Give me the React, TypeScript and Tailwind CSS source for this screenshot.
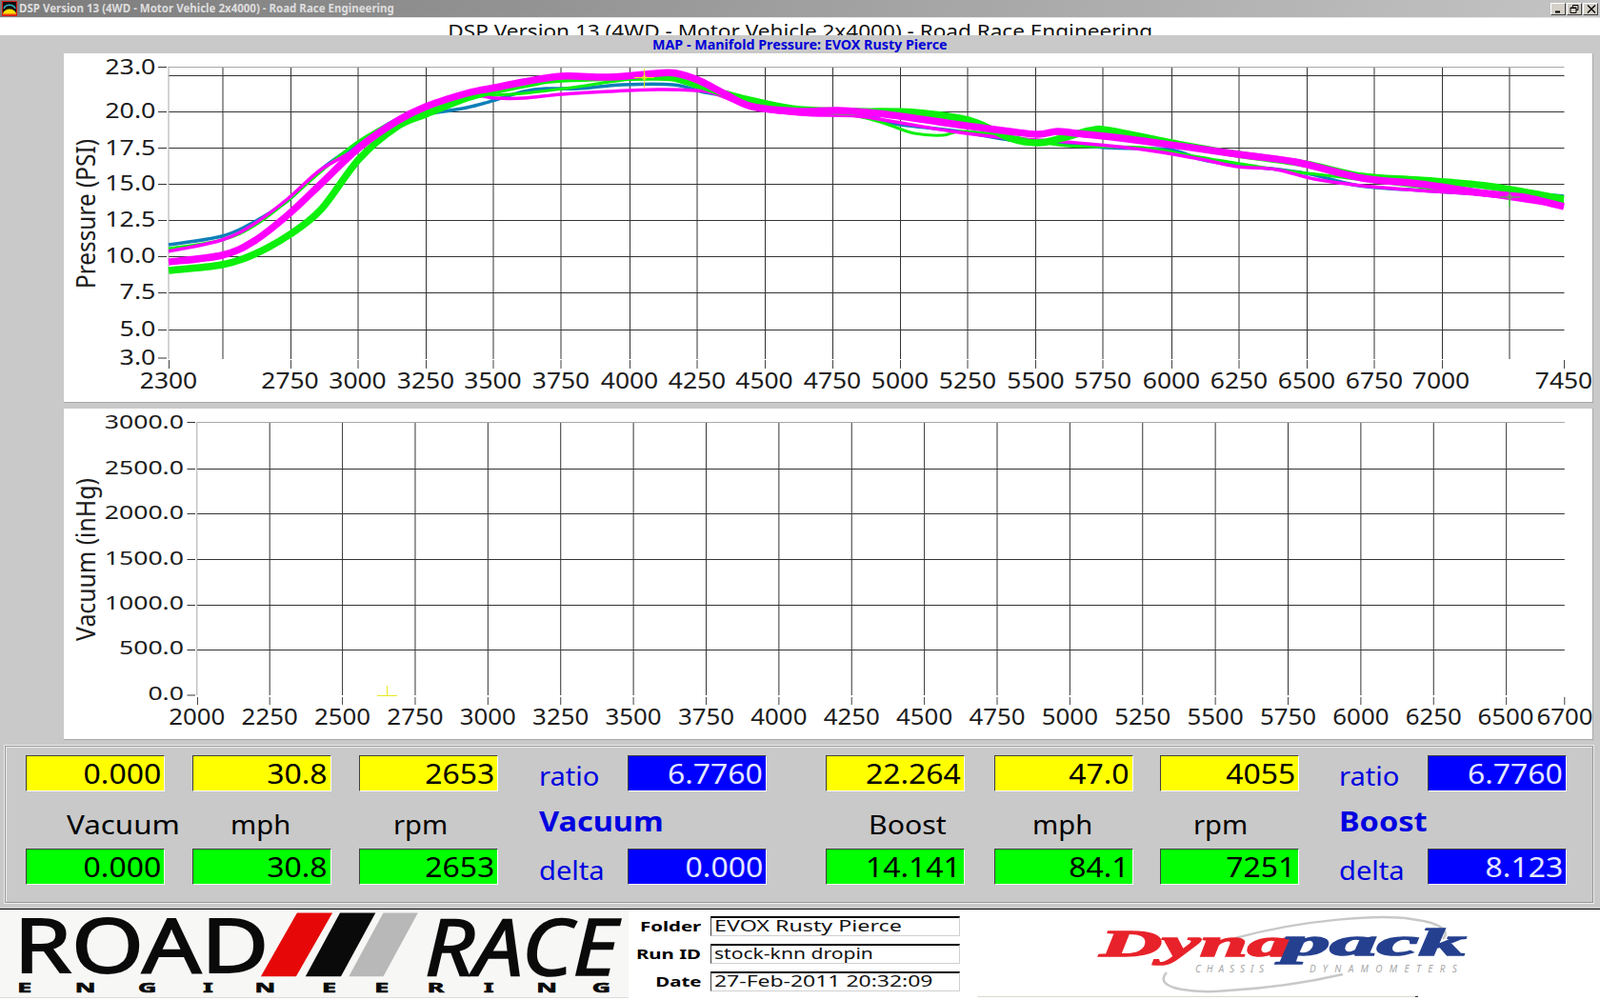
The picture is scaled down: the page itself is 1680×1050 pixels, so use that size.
import type { ReactNode } from 'react';

type Pt = [number, number];

// catmull-rom through the traced points, coordinates are page pixels
const smooth = (pts: Pt[]) => {
  let d = `M${pts[0][0]} ${pts[0][1]}`;
  for (let i = 0; i < pts.length - 1; i++) {
    const p0 = pts[Math.max(i - 1, 0)];
    const p1 = pts[i];
    const p2 = pts[i + 1];
    const p3 = pts[Math.min(i + 2, pts.length - 1)];
    d += ` C${p1[0] + (p2[0] - p0[0]) / 6} ${p1[1] + (p2[1] - p0[1]) / 6} ${p2[0] - (p3[0] - p1[0]) / 6} ${p2[1] - (p3[1] - p1[1]) / 6} ${p2[0]} ${p2[1]}`;
  }
  return d;
};

const blueRun: Pt[] = [[177, 257], [233, 248], [267, 233], [303, 210], [337, 178], [377, 150], [417, 125], [447, 120], [490, 113], [520, 105], [550, 96], [573, 93], [607, 93], [653, 89], [707, 89], [740, 97], [773, 102], [807, 109], [840, 114], [873, 120], [907, 120], [940, 130], [1007, 138], [1060, 147], [1093, 148], [1160, 155], [1227, 157], [1260, 167], [1293, 173], [1343, 178], [1377, 183], [1427, 195], [1493, 200], [1560, 204], [1600, 203], [1642, 206]];
const thinGreen: Pt[] = [[177, 261], [233, 252], [267, 237], [303, 210], [337, 180], [377, 148], [417, 126], [447, 117], [490, 103], [520, 100], [550, 98], [607, 91], [640, 86], [673, 82], [700, 82], [727, 90], [753, 98], [790, 108], [840, 114], [900, 122], [930, 130], [960, 140], [990, 142], [1010, 138], [1060, 143], [1120, 153], [1200, 155], [1260, 165], [1340, 178], [1400, 185], [1560, 205], [1642, 212]];
const thinPink: Pt[] = [[177, 264], [233, 252], [267, 235], [303, 208], [337, 178], [377, 155], [417, 125], [447, 113], [490, 100], [520, 103], [550, 103], [590, 99], [640, 96], [690, 94], [730, 95], [750, 98], [790, 113], [840, 120], [900, 122], [940, 128], [1000, 138], [1060, 145], [1120, 149], [1200, 157], [1260, 167], [1300, 175], [1340, 178], [1380, 188], [1430, 195], [1490, 200], [1560, 205], [1642, 217]];
const thickGreen: Pt[] = [[177, 284], [233, 278], [267, 267], [303, 247], [337, 220], [377, 167], [417, 133], [447, 120], [490, 103], [520, 95], [560, 87], [590, 83], [690, 81], [720, 85], [760, 98], [800, 108], [840, 115], [900, 117], [960, 118], [1020, 127], [1060, 145], [1090, 150], [1115, 145], [1145, 137], [1165, 137], [1240, 152], [1300, 162], [1370, 172], [1430, 185], [1490, 189], [1560, 195], [1642, 209]];
const thickPink: Pt[] = [[177, 275], [233, 268], [267, 253], [303, 225], [337, 193], [377, 155], [417, 127], [447, 112], [490, 98], [520, 92], [550, 86], [590, 80], [640, 81], [690, 77], [710, 77], [735, 85], [760, 98], [790, 112], [840, 117], [880, 116], [930, 120], [1000, 130], [1060, 138], [1090, 141], [1110, 138], [1130, 140], [1200, 148], [1300, 162], [1360, 170], [1430, 187], [1490, 193], [1560, 203], [1600, 207], [1642, 217]];

const upperGridX = [234, 305.5, 376, 447.5, 518, 589, 661.5, 732, 803.5, 874.5, 945.5, 1016, 1087.5, 1158, 1230.5, 1301, 1372.5, 1443, 1514.5, 1585];
const upperGridY = [79.5, 117.5, 155.5, 193.5, 231.5, 269.5, 307.5, 346.5];
const upperTicksY = [70.5, 117.5, 155.5, 193.5, 231.5, 269.5, 307.5, 346.5, 376];
const upperYLabels: [string, number][] = [['23.0', 70.5], ['20.0', 116.5], ['17.5', 155], ['15.0', 192.5], ['12.5', 230], ['10.0', 268], ['7.5', 306], ['5.0', 345], ['3.0', 375]];
const upperXLabels: [string, number][] = [['2300', 177], ['2750', 304.5], ['3000', 375.5], ['3250', 447], ['3500', 517.5], ['3750', 589], ['4000', 661], ['4250', 732], ['4500', 802.5], ['4750', 874], ['5000', 945], ['5250', 1016], ['5500', 1087.5], ['5750', 1158], ['6000', 1230], ['6250', 1301], ['6500', 1372], ['6750', 1443], ['7000', 1513], ['7450', 1642]];

const lowerGridX = Array.from({ length: 18 }, (_, i) => 283.2 + i * 76.38);
const lowerGridY = [492.5, 539.5, 587.5, 635.5, 682.5];
const lowerTicksY = [443.5, 492.5, 539.5, 587.5, 635.5, 682.5, 730];
const lowerYLabels: [string, number][] = [['3000.0', 443], ['2500.0', 491], ['2000.0', 538], ['1500.0', 585.5], ['1000.0', 633], ['500.0', 680], ['0.0', 728]];
const lowerXLabels: [string, number][] = [...Array.from({ length: 18 }, (_, i): [string, number] => [String(2000 + i * 250), 206.8 + i * 76.38]), ['6500', 1581], ['6700', 1643]];

const Tick = ({ x, y, size, sx, anchor, children }: { x: number; y: number; size: number; sx: number; anchor: 'start' | 'middle' | 'end'; children: ReactNode }) => (
  <text transform={`translate(${x} ${y}) scale(${sx} 1)`} textAnchor={anchor} dy=".36em" fontSize={size} fill="#1c1c1c">
    {children}
  </text>
);

const UpperChart = () => (
  <svg viewBox="67 56 1605 366" className="block w-full h-full">
    {upperGridY.map((y) => <line key={y} x1={177} x2={1642.5} y1={y} y2={y} stroke="#333" strokeWidth={1} />)}
    {upperGridX.map((x) => <line key={x} x1={x} x2={x} y1={70} y2={377} stroke="#333" strokeWidth={1} />)}
    {upperGridX.map((x) => <line key={x} x1={x} x2={x} y1={378} y2={387} stroke={x === 234 || x === 1585 ? 'none' : '#444'} strokeWidth={1} />)}
    {[177.5, 1642.5].map((x) => <line key={x} x1={x} x2={x} y1={378} y2={387} stroke="#444" strokeWidth={1} />)}
    <line x1={177} x2={1642.5} y1={70.5} y2={70.5} stroke="#a8a8a8" strokeWidth={1} />
    <line x1={177} x2={177} y1={70} y2={377} stroke="#a8a8a8" strokeWidth={1} />
    {upperTicksY.map((y) => <line key={y} x1={166} x2={175} y1={y} y2={y} stroke="#333" strokeWidth={1} />)}

    <g fill="none" strokeLinejoin="round" strokeLinecap="butt">
      <path d={smooth(blueRun)} stroke="#0f7fb8" strokeWidth={3.5} />
      <path d={smooth(thinGreen)} stroke="#0cf00c" strokeWidth={3} />
      <path d={smooth(thinPink)} stroke="#ff00ff" strokeWidth={3.5} />
      <path d={smooth(thickGreen)} stroke="#0cf00c" strokeWidth={7.5} />
      <path d={smooth(thickPink)} stroke="#ff00ff" strokeWidth={7.5} />
    </g>

    {/* cursors */}
    <g fill="none" stroke="#e8e820" strokeWidth={1}>
      <path d="M676.5 72V92M666 81.5H687" />
      <circle cx={676.5} cy={81.5} r={2} />
    </g>
    <path d="M1585 197V217M1575 207H1596" fill="none" stroke="#22e022" strokeWidth={1} />
    <rect x={1583} y={205} width={4} height={4} fill="none" stroke="#888" strokeWidth={1} />

    {upperYLabels.map(([t, y]) => <Tick key={t} x={163.5} y={y} size={21.5} sx={1.25} anchor="end">{t}</Tick>)}
    {upperXLabels.map(([t, x]) => <Tick key={t} x={x} y={400} size={23.3} sx={1.135} anchor="middle">{t}</Tick>)}
    <text transform="translate(100 224.5) rotate(-90) scale(.87 1)" textAnchor="middle" fontSize={28} fill="#1c1c1c">
      Pressure (PSI)
    </text>
  </svg>
);

const LowerChart = () => (
  <svg viewBox="67 429 1605 347" className="block w-full h-full">
    {lowerGridY.map((y) => <line key={y} x1={206.8} x2={1642.8} y1={y} y2={y} stroke="#333" strokeWidth={1} />)}
    {lowerGridX.map((x) => <line key={x} x1={x} x2={x} y1={443} y2={730} stroke="#333" strokeWidth={1} />)}
    {lowerGridX.map((x) => <line key={x} x1={x} x2={x} y1={732} y2={740} stroke="#444" strokeWidth={1} />)}
    <line x1={207.5} x2={207.5} y1={732} y2={740} stroke="#444" strokeWidth={1} />
    <line x1={1642.8} x2={1642.8} y1={732} y2={740} stroke="#444" strokeWidth={1} />
    <line x1={206.8} x2={1642.8} y1={443.5} y2={443.5} stroke="#a8a8a8" strokeWidth={1} />
    <line x1={206.8} x2={206.8} y1={443} y2={730} stroke="#a8a8a8" strokeWidth={1} />
    {lowerTicksY.map((y) => <line key={y} x1={196.5} x2={205} y1={y} y2={y} stroke="#333" strokeWidth={1} />)}
    <path d="M406.5 720V730M396 730.5H417" fill="none" stroke="#e8e820" strokeWidth={1} />

    {lowerYLabels.map(([t, y]) => <Tick key={t} x={193} y={y} size={20.5} sx={1.3} anchor="end">{t}</Tick>)}
    {lowerXLabels.map(([t, x]) => <Tick key={t} x={x} y={753} size={23.3} sx={1.11} anchor="middle">{t}</Tick>)}
    <text transform="translate(100 587.5) rotate(-90) scale(.92 1)" textAnchor="middle" fontSize={27} fill="#1c1c1c">
      Vacuum (inHg)
    </text>
  </svg>
);

const Readout = ({ value, tone }: { value: string; tone: 'yellow' | 'green' | 'blue' }) => {
  const toneClass = tone === 'yellow' ? 'bg-[#ffff00] text-black' : tone === 'green' ? 'bg-[#00ff00] text-black' : 'bg-[#0000ff] text-[#e4e8ff]';
  return (
    <div className={`w-[146px] h-[38px] flex items-center justify-end pr-[3px] pb-[2px] border border-t-[#404040] border-l-[#404040] border-b-white border-r-white text-[29px] leading-none ${toneClass}`}>
      <span className="inline-block origin-right scale-x-[1.1]">{value}</span>
    </div>
  );
};

const Caption = ({ text, className, scale }: { text: string; className: string; scale: string }) => (
  <div className={`whitespace-nowrap text-[28px] leading-none ${className}`}>
    <span className={`inline-block origin-left ${scale}`}>{text}</span>
  </div>
);

type GroupProps = {
  gridClass: string;
  top: string[];
  bottom: string[];
  ratio: string;
  delta: string;
  title: string;
  labels: [string, string, string][];
};

const ReadoutGroup = ({ gridClass, top, bottom, ratio, delta, title, labels }: GroupProps) => (
  <div className={`grid grid-rows-[38px_60px_38px] ${gridClass}`}>
    {top.map((v) => <Readout key={v} value={v} tone="yellow" />)}
    <Caption text="ratio" scale="scale-x-[1.04]" className="self-center pt-[4px] text-[#0000e0]" />
    <Readout value={ratio} tone="blue" />

    {labels.map(([t, ml, scale]) => <Caption key={t} text={t} scale={scale} className={`self-center pt-[8px] text-black ${ml}`} />)}
    <div className="self-center pt-[2px] whitespace-nowrap text-[28px] leading-none font-bold text-[#0000e0]">
      <span className="inline-block origin-left scale-x-[1.16]">{title}</span>
    </div>
    <div />

    {bottom.map((v) => <Readout key={v} value={v} tone="green" />)}
    <Caption text="delta" scale="scale-x-[1.04]" className="self-center pt-[6px] text-[#0000e0]" />
    <Readout value={delta} tone="blue" />
  </div>
);

const Field = ({ label, value, scale }: { label: string; value: string; scale: string }) => (
  <div className="flex h-[21px] items-center">
    <div className="w-[86px] pr-[10px] text-right text-[15px] font-bold leading-none text-black">
      <span className="inline-block origin-right scale-x-[1.36]">{label}</span>
    </div>
    <div className="w-[262px] h-[21px] flex items-center pl-[3px] bg-white border border-t-2 border-t-black border-l-[#404040] border-b-[#d0d0d0] border-r-[#d0d0d0] text-[15.5px] leading-none text-[#111]">
      <span className={`inline-block origin-left whitespace-nowrap ${scale}`}>{value}</span>
    </div>
  </div>
);

const RoadRaceLogo = () => (
  <svg viewBox="0 955 660 93" className="block w-full h-full">
    <text transform="translate(11 1021.5) scale(1.23 1)" fontSize={80} fill="#0a0a0a" stroke="#0a0a0a" strokeWidth={1.8}>ROAD</text>
    <path d="M311.7 958.5H349.3L310.7 1026H273.3Z" fill="#e60808" />
    <path d="M357.3 958.5H395L358.3 1026H320.7Z" fill="#0a0a0a" />
    <path d="M403.3 958.5H440L403.3 1026H366.7Z" fill="#b8b8b8" />
    <text transform="translate(447 1025) scale(1.1 1)" fontSize={84} fontStyle="italic" fill="#0a0a0a" stroke="#0a0a0a" strokeWidth={1.6}>RACE</text>
    <text transform="translate(0 1043) scale(1.8 1)" x="8.3 42.2 79.4 117.8 148.3 187.8 218.9 250 283.3 314.4 347.2" fontSize={15} fontWeight={700} fill="#0a0a0a" stroke="#0a0a0a" strokeWidth={0.7}>ENGINEERING</text>
  </svg>
);

const DynapackLogo = () => (
  <svg viewBox="1008 955 672 95" className="block w-full h-full">
    <path d="M1297 985C1370 965 1450 960 1482 965C1520 970 1521 980 1515 986" fill="none" stroke="#c8c8c8" strokeWidth={2.5} />
    <path d="M1225 1021C1208 1040 1260 1043 1290 1040C1340 1037 1380 1030 1410 1023" fill="none" stroke="#c8c8c8" strokeWidth={2.5} />
    <g fontFamily="'Liberation Serif', serif" fontStyle="italic" fontWeight={700} fontSize={40}>
      <text transform="translate(1155 1004) scale(2.25 1)" fill="#e8222a" stroke="#e8222a" strokeWidth={1.6}>Dyna</text>
      <text transform="translate(1347 1003) scale(2.47 1)" fill="#25408f" stroke="#25408f" strokeWidth={1.6}>pack</text>
    </g>
    <text x={1255} y={1021} fontSize={10} fontStyle="italic" letterSpacing={5.9} fill="#a8a8a8">CHASSIS</text>
    <text x={1375} y={1021} fontSize={10} fontStyle="italic" letterSpacing={7.3} fill="#a8a8a8">DYNAMOMETERS</text>
    <line x1={1026} x2={1486} y1={1046.5} y2={1046.5} stroke="#d8d8d0" strokeWidth={1} />
    <line x1={1486} x2={1489} y1={1046.5} y2={1046.5} stroke="#333" strokeWidth={1} />
  </svg>
);

const AppIcon = () => (
  <svg viewBox="0 0 16 16" className="w-[16px] h-[16px] shrink-0">
    <rect x="0" y="0" width="16" height="16" fill="#d81818" />
    <rect x="1" y="1" width="14" height="14" fill="#101010" />
    <path d="M2 8C4 3 12 3 14 8" fill="none" stroke="#30b8c8" strokeWidth="1.5" />
    <path d="M1 15V13C3 7 13 7 15 13V15Z" fill="#ffe000" />
    <path d="M1 15V13.5H15V15Z" fill="#e84010" />
  </svg>
);

const WinButton = ({ children }: { children: ReactNode }) => (
  <div className="w-[16px] h-[13px] flex items-center justify-center bg-[#d4d0c8] border border-t-white border-l-white border-b-[#404040] border-r-[#404040]">
    {children}
  </div>
);

export default function App() {
  return (
    <div className="w-[1680px] h-[1050px] overflow-hidden bg-white [font-family:'Liberation_Sans',sans-serif]">
      {/* window title */}
      <div className="h-[18px] flex items-center justify-between pl-[2px] pr-[2px] bg-gradient-to-r from-[#7c7c7c] to-[#c4c4c4]">
        <div className="flex items-center gap-[2px]">
          <AppIcon />
          <span className="text-[11.5px] font-bold leading-none text-[#dedede]">DSP Version 13 (4WD - Motor Vehicle 2x4000) - Road Race Engineering</span>
        </div>
        <div className="flex items-center gap-[1px]">
          <WinButton>
            <svg viewBox="0 0 10 9" className="w-[10px] h-[9px]"><path d="M2 7.5H7" stroke="#000" strokeWidth="2" /></svg>
          </WinButton>
          <WinButton>
            <svg viewBox="0 0 10 9" className="w-[10px] h-[9px]"><path d="M3.5 2.5V.5H9V5.5H7M1 3H7V8.5H1Z M1 3.5H7" fill="none" stroke="#000" strokeWidth="1" /></svg>
          </WinButton>
          <WinButton>
            <svg viewBox="0 0 10 9" className="w-[10px] h-[9px] ml-[1px]"><path d="M1 .5L9 8.5M9 .5L1 8.5" stroke="#000" strokeWidth="1.4" /></svg>
          </WinButton>
        </div>
      </div>

      {/* report title, cut off by the panel below like in the app */}
      <div className="h-[19px] overflow-hidden flex justify-center pt-[3px] bg-white border-t border-[#e8e8e8]">
        <span className="inline-block scale-x-[1.1] text-[20.5px] leading-none whitespace-nowrap text-[#111]">
          DSP Version 13 (4WD - Motor Vehicle 2x4000) - Road Race Engineering
        </span>
      </div>

      <div className="h-[917px] bg-[#c9c9c9]">
        <div className="h-[19px] flex items-center justify-center">
          <span className="inline-block scale-x-[1.02] text-[14px] font-bold leading-none text-[#0000d8]">MAP - Manifold Pressure: EVOX Rusty Pierce</span>
        </div>

        <div className="ml-[67px] w-[1606px]">
          <div className="h-[367px] bg-white border-b border-r border-[#a8a8a8]">
            <UpperChart />
          </div>
          <div className="h-[348px] mt-[6px] bg-white border-b border-r border-[#a8a8a8]">
            <LowerChart />
          </div>
        </div>

        {/* readouts */}
        <div className="mt-[6px] ml-[5px] w-[1668px] h-[165px] pt-[9px] pl-[21px] flex border border-[#989898] shadow-[inset_1px_1px_0_#ececec,0_0_0_1px_#ececec]">
          <ReadoutGroup
            gridClass="grid-cols-[175px_175px_189px_93px_146px] mr-[62px]"
            top={['0.000', '30.8', '2653']}
            bottom={['0.000 ', '30.8 ', '2653 ']}
            ratio="6.7760"
            delta="0.000"
            title="Vacuum"
            labels={[['Vacuum', 'ml-[43px]', 'scale-x-[1.12]'], ['mph', 'ml-[40px]', 'scale-x-[1.04]'], ['rpm', 'ml-[36px]', 'scale-x-[1.04]']]}
          />
          <ReadoutGroup
            gridClass="grid-cols-[177px_174px_188px_93px_146px]"
            top={['22.264', '47.0', '4055']}
            bottom={['14.141', '84.1', '7251']}
            ratio="6.7760"
            delta="8.123"
            title="Boost"
            labels={[['Boost', 'ml-[45px]', 'scale-x-[1.08]'], ['mph ', 'ml-[40px]', 'scale-x-[1.04]'], ['rpm ', 'ml-[35px]', 'scale-x-[1.04]']]}
          />
        </div>
      </div>

      {/* footer with logos and run info */}
      <div className="h-[96px] flex border-t border-black">
        <div className="w-[660px] h-[93px] bg-[#f7f7f5] border-b border-[#dcdcdc]">
          <RoadRaceLogo />
        </div>
        <div className="w-[348px] pt-[7px] flex flex-col gap-[8px]">
          <Field label="Folder" value="EVOX Rusty Pierce" scale="scale-x-[1.5]" />
          <Field label="Run ID" value="stock-knn dropin" scale="scale-x-[1.36]" />
          <Field label="Date" value="27-Feb-2011 20:32:09" scale="scale-x-[1.48]" />
        </div>
        <div className="w-[672px] h-[95px]">
          <DynapackLogo />
        </div>
      </div>
    </div>
  );
}
